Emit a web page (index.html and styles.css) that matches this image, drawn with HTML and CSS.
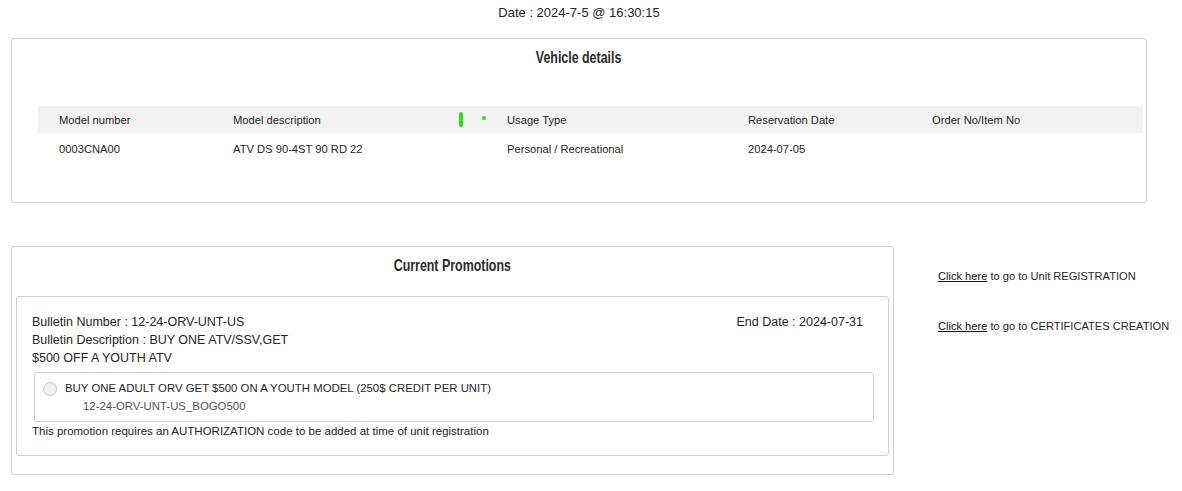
FILE: index.html
```html
<!DOCTYPE html>
<html lang="en">
<head>
<meta charset="utf-8">
<title>Vehicle promotions</title>
<link rel="stylesheet" href="styles.css">
</head>
<body>
<div class="page">
  <div class="stamp">Date : 2024-7-5 @ 16:30:15</div>

  <section class="card vehicle">
    <h2 class="card-title"><span>Vehicle details</span></h2>
    <div class="vtable">
      <div class="vrow vhead">
        <div class="cell">Model number</div>
        <div class="cell">Model description</div>
        <div class="cell marks"><span class="bar"></span><span class="dot"></span></div>
        <div class="cell">Usage Type</div>
        <div class="cell">Reservation Date</div>
        <div class="cell">Order No/Item No</div>
      </div>
      <div class="vrow">
        <div class="cell">0003CNA00</div>
        <div class="cell">ATV DS 90-4ST 90 RD 22</div>
        <div class="cell"></div>
        <div class="cell">Personal / Recreational</div>
        <div class="cell">2024-07-05</div>
        <div class="cell"></div>
      </div>
    </div>
  </section>

  <div class="lower">
    <section class="card promos">
      <h2 class="card-title"><span>Current Promotions</span></h2>
      <div class="bulletin">
        <div class="bulletin-head">
          <div class="bulletin-info">
            <div>Bulletin Number : 12-24-ORV-UNT-US</div>
            <div>Bulletin Description : BUY ONE ATV/SSV,GET</div>
            <div>$500 OFF A YOUTH ATV</div>
          </div>
          <div class="end-date">End Date : 2024-07-31</div>
        </div>
        <label class="option">
          <input type="radio" name="promo" class="radio">
          <span class="option-text">
            <span class="option-name">BUY ONE ADULT ORV GET $500 ON A YOUTH MODEL (250$ CREDIT PER UNIT)</span>
            <span class="option-code">12-24-ORV-UNT-US_BOGO500</span>
          </span>
        </label>
        <div class="note">This promotion requires an AUTHORIZATION code to be added at time of unit registration</div>
      </div>
    </section>

    <aside class="links">
      <p><a href="#">Click here</a> to go to Unit REGISTRATION</p>
      <p><a href="#">Click here</a> to go to CERTIFICATES CREATION</p>
    </aside>
  </div>
</div>
</body>
</html>
```

FILE: styles.css
```css
* { box-sizing: border-box; }

body {
  margin: 0;
  background: #fff;
  color: #262626;
  font-family: "Liberation Sans", Arial, sans-serif;
  font-size: 12px;
}

.page {
  padding: 0 11px;
}

.stamp {
  width: 1136px;
  text-align: center;
  font-size: 13px;
  line-height: 16px;
  padding-top: 5px;
  height: 38px;
}

.card {
  border: 1px solid #cfcfcf;
  border-radius: 3px;
  background: #fff;
}

/* condensed heading face */
.card-title {
  margin: 0;
  text-align: center;
  font-family: "Liberation Sans", Arial, sans-serif;
  font-weight: bold;
  font-size: 17px;
  line-height: 20px;
  color: #2b2b2b;
  padding-top: 9px;
}

.card-title span {
  display: inline-block;
  transform: scaleX(0.73);
}

/* vehicle table */
.vehicle {
  width: 1136px;
  height: 165px;
}

.vtable {
  margin: 38px 3px 0 26px;
  font-size: 11.2px;
}

.vrow {
  display: grid;
  grid-template-columns: 174px 226px 48px 241px 184px 1fr;
  align-items: center;
  height: 30px;
}

.vhead {
  background: #f2f2f2;
  height: 27px;
  margin-bottom: 1px;
}

.cell {
  padding-left: 21px;
  white-space: nowrap;
}

.marks {
  display: flex;
  align-items: center;
}

.bar {
  width: 5px;
  height: 15px;
  border-radius: 3px;
  background: #2fdc1e;
}

.dot {
  width: 4px;
  height: 4px;
  border-radius: 50%;
  background: #2fdc1e;
  margin-left: 19px;
  margin-top: -3px;
}

/* lower section */
.lower {
  display: flex;
  align-items: flex-start;
  margin-top: 43px;
}

.promos {
  flex: 0 0 883px;
  width: 883px;
  height: 229px;
  padding: 0 4px;
}

.bulletin {
  margin-top: 20px;
  border: 1px solid #cfcfcf;
  border-radius: 3px;
  height: 160px;
  padding: 16px 14px 0 15px;
  font-size: 12.5px;
}

.bulletin-head {
  display: flex;
  justify-content: space-between;
  line-height: 18px;
  padding-right: 11px;
}

.option {
  display: flex;
  align-items: flex-start;
  margin: 5px 0 0 2px;
  border: 1px solid #cfcfcf;
  border-radius: 3px;
  height: 50px;
  padding: 6px 8px 0 8px;
  font-size: 11.4px;
}

.radio {
  margin: 3px 8px 0 0;
  width: 14px;
  height: 14px;
  flex: 0 0 14px;
  appearance: none;
  border: 1px solid #c8c8c8;
  border-radius: 50%;
  background: #f1f1f1;
}

.option-text {
  display: flex;
  flex-direction: column;
  line-height: 18px;
}

.option-code {
  color: #555;
  padding-left: 18px;
}

.note {
  font-size: 11.5px;
  line-height: 18px;
}

.links {
  flex: 0 0 auto;
  margin-left: 44px;
  padding-top: 21px;
  font-size: 11.1px;
  white-space: nowrap;
}

.links p {
  margin: 0 0 32px;
  line-height: 18px;
}

.links a {
  color: #111;
}
```
